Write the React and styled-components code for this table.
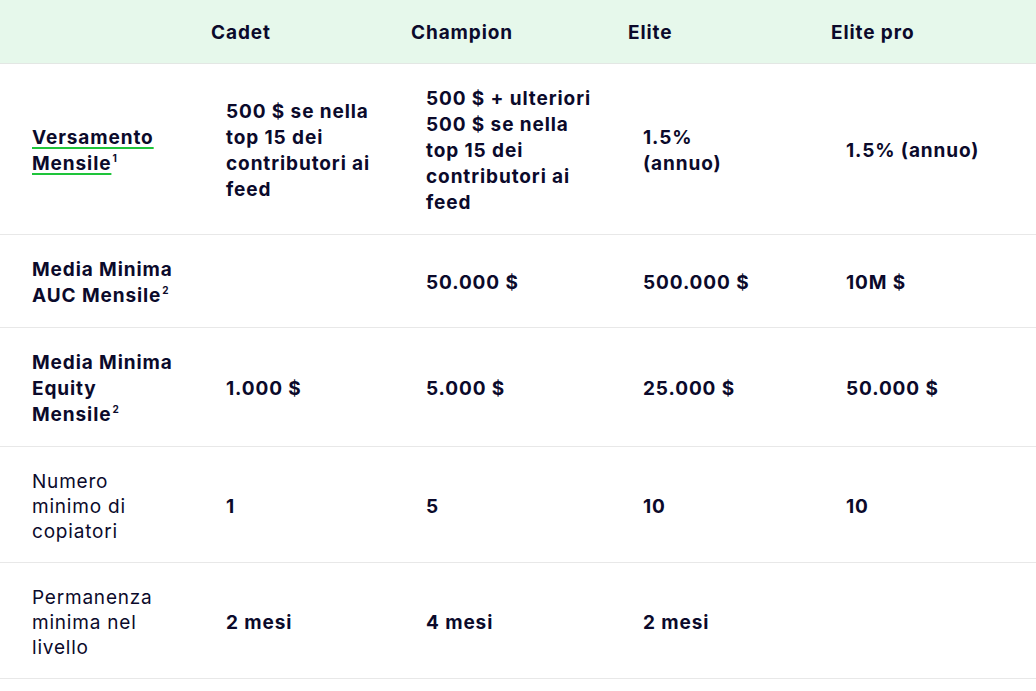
import React from 'react';
import styled, { createGlobalStyle } from 'styled-components';

const GlobalStyle = createGlobalStyle`
  body {
    margin: 0;
    background: #ffffff;
    font-family: 'Inter', 'Noto Sans', sans-serif;
    color: #0b0a2b;
  }
`;

const COLS = '195px 200px 217px 203px 1fr';

const Table = styled.div`
  width: 1036px;
  display: grid;
  grid-template-columns: ${COLS};
`;

const HeadCell = styled.div`
  height: 61px;
  background: #e6f8eb;
  border-bottom: 1px solid #e3e7e4;
  display: flex;
  align-items: center;
  padding: 2px 0 0 16px;
  font-size: 19px;
  font-weight: 700;
  letter-spacing: 0.9px;
`;

const Cell = styled.div`
  min-height: ${(p) => p.$h}px;
  box-sizing: border-box;
  border-bottom: 1px solid #e8e8e8;
  display: flex;
  align-items: center;
  padding: 22px 0 18px ${(p) => (p.$label ? 32 : 31)}px;
`;

const Content = styled.div`
  max-width: ${(p) => (p.$w ? `${p.$w}px` : 'none')};
  font-size: 19px;
  letter-spacing: ${(p) => (p.$regular ? 0.8 : 0.9)}px;
  line-height: ${(p) => (p.$regular ? 25 : 26)}px;
  font-weight: ${(p) => (p.$regular ? 400 : 700)};
`;

const Linked = styled.span`
  text-decoration: underline;
  text-decoration-color: #1ec43a;
  text-decoration-thickness: 2px;
  text-underline-offset: 3px;
`;

const Sup = styled.sup`
  display: inline-block;
  font-size: 10px;
  line-height: 10px;
  vertical-align: 8px;
  margin-left: 1px;
  letter-spacing: 0;
`;

const widths = [145, 160, 170, 125, null];

const rows = [
  {
    h: 171,
    label: (
      <Linked>
        Versamento Mensile<Sup>1</Sup>
      </Linked>
    ),
    values: [
      '500 $ se nella top 15 dei contributori ai feed',
      '500 $ + ulteriori 500 $ se nella top 15 dei contributori ai feed',
      '1.5% (annuo)',
      '1.5% (annuo)',
    ],
  },
  {
    h: 93,
    label: (
      <>
        Media Minima AUC Mensile<Sup>2</Sup>
      </>
    ),
    values: ['', '50.000 $', '500.000 $', '10M $'],
  },
  {
    h: 119,
    label: (
      <>
        Media Minima Equity Mensile<Sup>2</Sup>
      </>
    ),
    values: ['1.000 $', '5.000 $', '25.000 $', '50.000 $'],
  },
  {
    h: 116,
    regular: true,
    label: 'Numero minimo di copiatori',
    values: ['1', '5', '10', '10'],
  },
  {
    h: 116,
    regular: true,
    label: 'Permanenza minima nel livello',
    values: ['2 mesi', '4 mesi', '2 mesi', ''],
  },
];

const headers = ['', 'Cadet', 'Champion', 'Elite', 'Elite pro'];

export default function App() {
  return (
    <>
      <GlobalStyle />
      <Table>
        {headers.map((h, i) => (
          <HeadCell key={`h${i}`}>{h}</HeadCell>
        ))}
        {rows.map((row, r) => (
          <React.Fragment key={r}>
            <Cell $h={row.h} $label>
              <Content $w={widths[0]} $regular={row.regular}>
                {row.label}
              </Content>
            </Cell>
            {row.values.map((v, c) => (
              <Cell key={c} $h={row.h}>
                <Content $w={widths[c + 1]}>{v}</Content>
              </Cell>
            ))}
          </React.Fragment>
        ))}
      </Table>
    </>
  );
}
